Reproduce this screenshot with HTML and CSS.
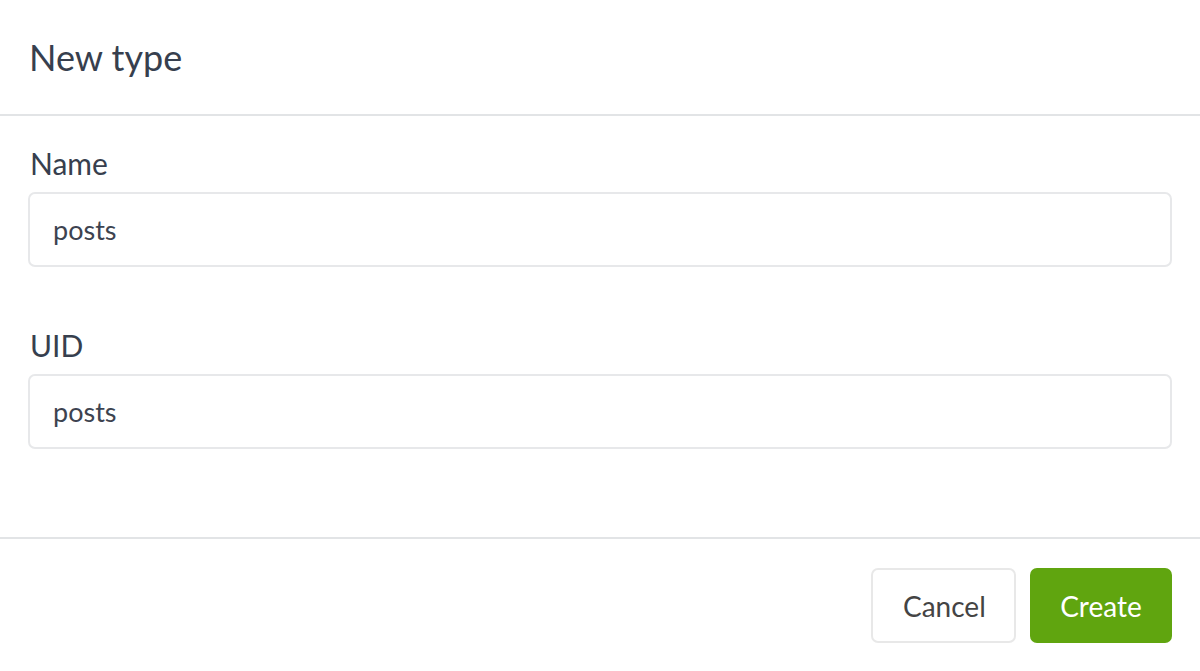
FILE: index.html
```html
<!DOCTYPE html>
<html lang="en">
<head>
    <meta charset="UTF-8">
    <meta name="viewport" content="width=device-width, initial-scale=1.0">
    <title>New type</title>
    <link rel="stylesheet" href="styles.css">
</head>
<body>
    <div class="modal">
        <div class="modal-header">
            <h1 class="title">New type</h1>
        </div>
        <div class="modal-body">
            <div class="field">
                <label for="typeName">Name</label>
                <input type="text" id="typeName" value="posts" />
            </div>
            <div class="field">
                <label for="typeUid">UID</label>
                <input type="text" id="typeUid" value="posts" />
            </div>
        </div>
        <div class="modal-footer">
            <button class="btn cancel">Cancel</button>
            <button class="btn create">Create</button>
        </div>
    </div>
</body>
</html>
```

FILE: styles.css
```css
body {
    font-family: Lato, "Noto Sans", sans-serif;
    background-color: white;
    color: #373f4e;
    margin: 0;
}
.modal {
    width: 1200px;
    height: 671px;
    display: flex;
    flex-direction: column;
}
.modal-header {
    height: 114px;
    display: flex;
    align-items: center;
    padding: 0 29px;
    border-bottom: 2px solid #e2e4e6;
}
.title {
    margin: 0;
    font-size: 36px;
    font-weight: normal;
}
.modal-body {
    padding: 27px 28px 0;
    height: 394px;
}
.field {
    display: flex;
    flex-direction: column;
    margin-bottom: 58px;
}
.field label {
    font-size: 30px;
    line-height: 40px;
    padding-left: 2px;
    margin-bottom: 9px;
}
.field input {
    height: 75px;
    box-sizing: border-box;
    border: 2px solid #e7e8ea;
    border-radius: 7px;
    padding: 0 23px;
    font-family: inherit;
    font-size: 27px;
    color: #3d4350;
    outline: none;
}
.modal-footer {
    border-top: 2px solid #e2e4e6;
    display: flex;
    justify-content: flex-end;
    gap: 14px;
    padding: 29px 28px 0;
}
.btn {
    height: 75px;
    border-radius: 7px;
    font-family: inherit;
    font-size: 28px;
    padding: 0 30px;
    cursor: pointer;
}
.cancel {
    width: 145px;
    background-color: white;
    border: 2px solid #e8e8e8;
    color: #444;
}
.create {
    width: 142px;
    background-color: #60a50f;
    border: none;
    color: white;
}
```
